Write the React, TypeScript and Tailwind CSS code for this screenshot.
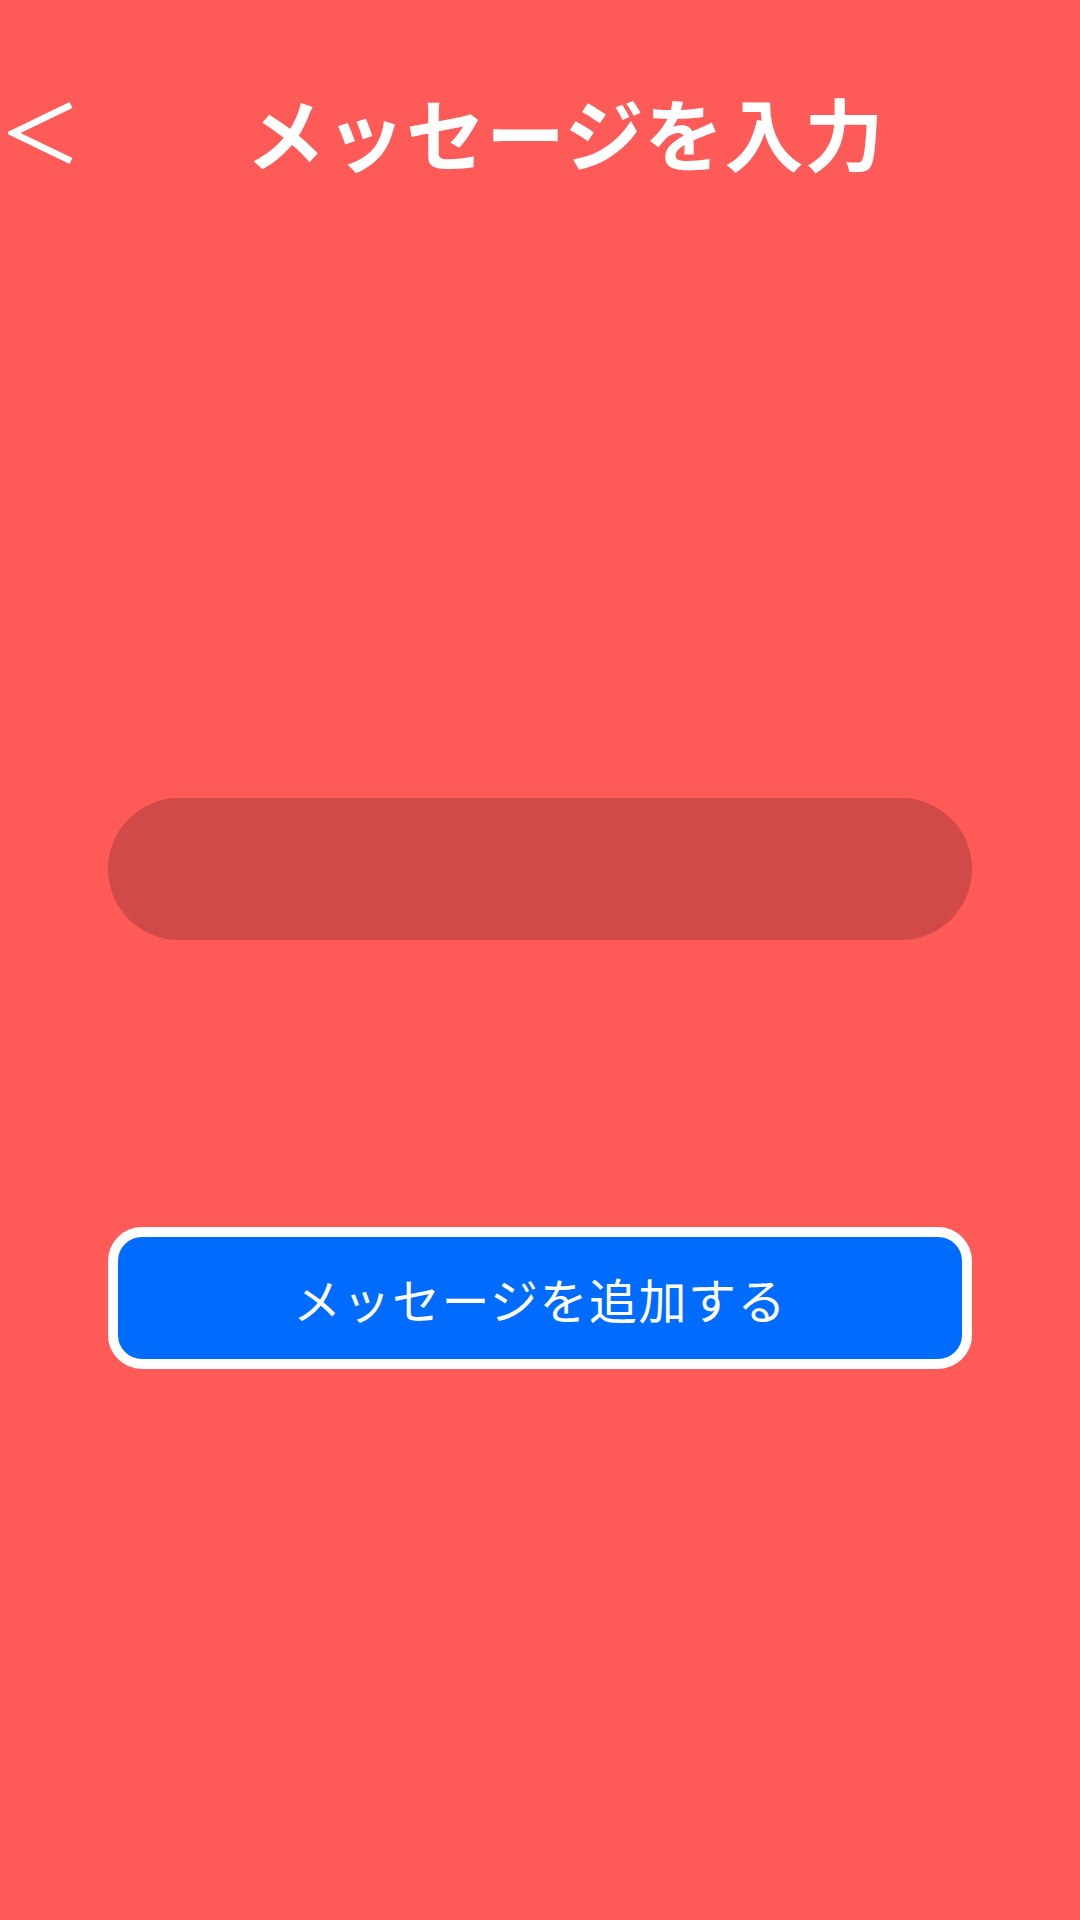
import React from "react";

export default function App() {
  return (
    <div className="w-[1080px] h-[1920px] bg-[#fe5a58] flex flex-col" style={{ fontFamily: '"Noto Sans CJK JP", "Noto Sans", sans-serif' }}>
      <div className="flex items-center h-[130px] mt-[66px]">
        <svg width="66" height="64" viewBox="0 0 66 64" className="ml-[8px] shrink-0 mt-[4px]">
          <polyline points="63,4 5,32 63,60" fill="none" stroke="#ffffff" strokeWidth="6.5" strokeLinejoin="miter" />
        </svg>
        <div className="ml-[172px] text-white font-bold text-[79px] leading-none tracking-[1px]">メッセージを入力</div>
      </div>
      <input
        className="mt-[602px] mx-[108px] h-[142px] rounded-full bg-[#d04a4a] outline-none border-0 px-[60px] text-white text-[48px]"
        type="text"
      />
      <button className="mt-[287px] mx-[108px] h-[142px] rounded-[34px] border-[10px] border-white bg-[#006cff] text-white text-[48px] font-normal tracking-[1.5px] flex items-center justify-center">
        メッセージを追加する
      </button>
    </div>
  );
}
